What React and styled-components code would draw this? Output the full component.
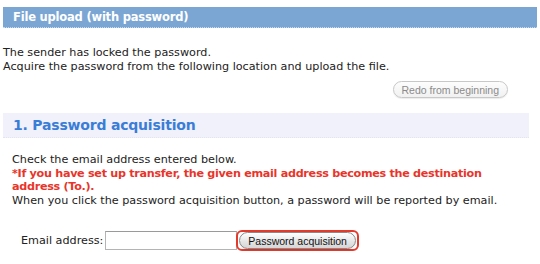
import React from 'react';
import styled, { createGlobalStyle } from 'styled-components';

const GlobalStyle = createGlobalStyle`
  body {
    margin: 0;
    background: #fff;
    font-family: "DejaVu Sans", Verdana, sans-serif;
    font-size: 11px;
    color: #222;
  }
`;

const Page = styled.div`
  width: 540px;
  height: 264px;
  padding: 7px 3px 0 3px;
  box-sizing: border-box;
  overflow: hidden;
`;

const TitleBar = styled.h1`
  margin: 0;
  height: 20px;
  line-height: 20px;
  padding-left: 10px;
  background: #7ba6d3;
  border-bottom: 1px dotted #c5d8ee;
  color: #fff;
  font-size: 11.5px;
  font-weight: bold;
  letter-spacing: -0.2px;
`;

const Text = styled.p`
  margin: ${(p) => p.margin || '0'};
  line-height: 13.5px;
  font-size: 11.2px;
  color: ${(p) => (p.warn ? '#e8352b' : '#222')};
  font-weight: ${(p) => (p.warn ? 'bold' : 'normal')};
  letter-spacing: ${(p) => (p.warn ? '-0.3px' : '0')};
`;

const ActionRow = styled.div`
  display: flex;
  justify-content: flex-end;
  padding-right: 29px;
  margin-top: 8px;
`;

const PillButton = styled.button`
  font-family: "Liberation Sans", Arial, sans-serif;
  font-size: 10.5px;
  height: 17px;
  padding: 0 8px;
  border-radius: 9px;
  border: 1px solid ${(p) => (p.disabled ? '#c8c8c8' : '#8a8a8a')};
  color: ${(p) => (p.disabled ? '#8a8a8a' : '#111')};
  background: ${(p) =>
    p.disabled
      ? 'linear-gradient(#fdfdfd, #f1f1f1)'
      : 'linear-gradient(#ffffff, #e6e6e6 55%, #d6d6d6)'};
  box-shadow: 0 1px 1px rgba(0, 0, 0, 0.08);
`;

const SectionBar = styled.h2`
  margin: 15px 8px 0 0;
  height: 24px;
  line-height: 24px;
  padding-left: 10px;
  background: #f1f1fc;
  border-bottom: 1px dotted #e4e4ee;
  color: #3a7dd6;
  font-size: 14px;
  font-weight: bold;
  letter-spacing: -0.2px;
`;

const Block = styled.div`
  padding-left: 9px;
  margin-top: 15px;
`;

const FormRow = styled.div`
  display: flex;
  align-items: center;
  margin-top: 23px;
  padding-left: 18px;
  gap: 2px;
`;

const Label = styled.label`
  font-size: 11.2px;
  color: #222;
`;

const Field = styled.input`
  width: 132px;
  height: 19px;
  box-sizing: border-box;
  border: 1px solid #b4b4b4;
  border-top-color: #9a9a9a;
  padding: 0 2px;
  font-family: "DejaVu Sans", Verdana, sans-serif;
  font-size: 11px;
`;

const Highlight = styled.div`
  display: flex;
  align-items: center;
  padding: 0 1px;
  border: 2px solid #e33a2c;
  border-radius: 6px;
  margin-left: -3px;
`;

export default function App() {
  return (
    <Page>
      <GlobalStyle />
      <TitleBar>File upload (with password)</TitleBar>
      <Text margin="18px 0 0 0">The sender has locked the password.</Text>
      <Text>Acquire the password from the following location and upload the file.</Text>
      <ActionRow>
        <PillButton disabled>Redo from beginning</PillButton>
      </ActionRow>
      <SectionBar>1. Password acquisition</SectionBar>
      <Block>
        <Text>Check the email address entered below.</Text>
        <Text warn>
          *If you have set up transfer, the given email address becomes the destination
          <br />
          address (To.).
        </Text>
        <Text>When you click the password acquisition button, a password will be reported by email.</Text>
      </Block>
      <FormRow>
        <Label htmlFor="mail">Email address:</Label>
        <Field id="mail" type="text" />
        <Highlight>
          <PillButton>Password acquisition</PillButton>
        </Highlight>
      </FormRow>
    </Page>
  );
}
